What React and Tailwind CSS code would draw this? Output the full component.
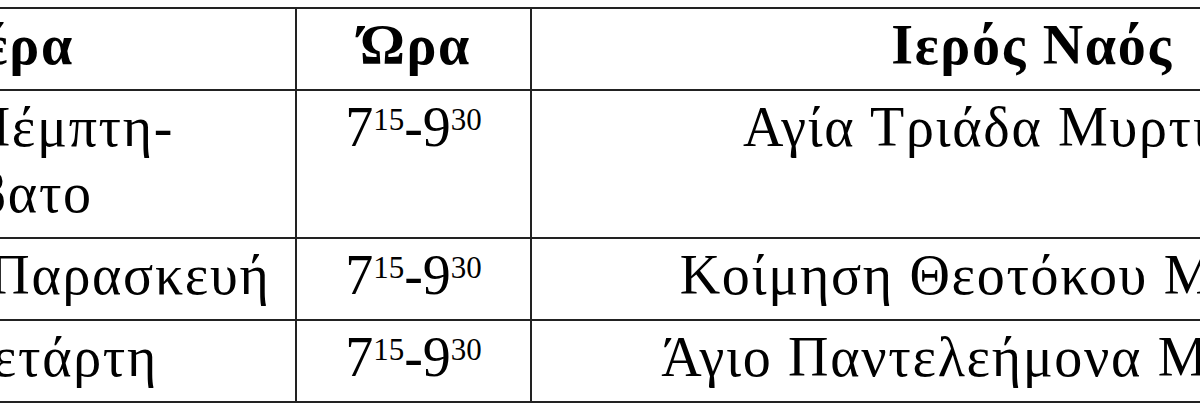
import React from "react";

const cell = "border-2 border-[#222] pt-[3px] pb-[11px] align-top text-center";

function Time() {
  return (
    <span className="whitespace-nowrap tracking-normal">
      7<sup className="text-[31px] top-[-16px]">15</sup>-9<sup className="text-[31px] top-[-16px]">30</sup>
    </span>
  );
}

export default function App() {
  const rows = [
    { day: <>Τρίτη, Πέμπτη-<br />Σάββατο</>, dayPad: "pl-2 pr-[32px]", church: "Αγία Τριάδα Μυρτιών", churchPad: "pl-2 pr-[54px]" },
    { day: "Δευτέρα-Παρασκευή", dayPad: "pl-[46px] pr-2 whitespace-nowrap", church: "Κοίμηση Θεοτόκου Μασουρών", churchPad: "pl-[56px] pr-2" },
    { day: "Τρίτη-Τετάρτη", dayPad: "pl-2 pr-[46px] whitespace-nowrap", church: "Άγιο Παντελεήμονα Μελιτσάχα", churchPad: "pl-[28px] pr-2" },
  ];
  return (
    <div className="w-[1200px] h-[413px] overflow-hidden bg-white">
      <table className="mt-[7px] ml-[-298px] w-[1830px] border-collapse table-fixed font-['Liberation_Serif',serif] text-[56px] leading-[66px] tracking-[0.03em] text-black">
        <colgroup>
          <col className="w-[593px]" />
          <col className="w-[235px]" />
          <col className="w-[1002px]" />
        </colgroup>
        <thead>
          <tr>
            <th className={cell + " pl-2 pr-[28px] font-bold"}>Ημέρα</th>
            <th className={cell + " pl-[12px] pr-2 font-bold"}>Ώρα</th>
            <th className={cell + " px-2 font-bold"}>Ιερός Ναός</th>
          </tr>
        </thead>
        <tbody>
          {rows.map((r, i) => (
            <tr key={i}>
              <td className={cell + " " + r.dayPad}>{r.day}</td>
              <td className={cell + " px-2"}><Time /></td>
              <td className={cell + " whitespace-nowrap " + r.churchPad}>{r.church}</td>
            </tr>
          ))}
        </tbody>
      </table>
    </div>
  );
}
